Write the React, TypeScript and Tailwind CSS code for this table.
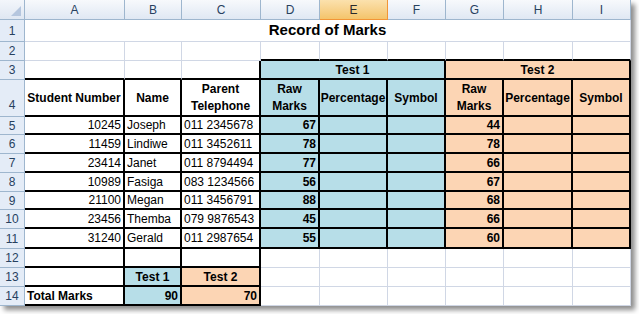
import React from 'react';

type Tone = 'blue' | 'orange' | 'none';

const Cell: React.FC<{
  children?: React.ReactNode;
  tone?: Tone;
  r?: boolean;
  b?: boolean;
  align?: 'left' | 'right' | 'center';
  bold?: boolean;
  span?: 'three' | 'nine';
  wrap?: boolean;
}> = ({ children, tone = 'none', r, b, align = 'left', bold, span, wrap }) => {
  const right = r ? 'border-r-2 border-r-black' : 'border-r border-r-[#d0d7e5]';
  const bottom = b ? 'border-b-2 border-b-black' : 'border-b border-b-[#d0d7e5]';
  const bg = tone === 'blue' ? 'bg-[#b7dee8]' : tone === 'orange' ? 'bg-[#fcd5b4]' : 'bg-white';
  const just =
    align === 'right' ? 'justify-end text-right' : align === 'center' ? 'justify-center text-center' : 'justify-start';
  const colSpan = span === 'three' ? 'col-span-3' : span === 'nine' ? 'col-span-9' : '';
  return (
    <div
      className={`flex items-center overflow-hidden px-[2px] text-black ${right} ${bottom} ${bg} ${just} ${colSpan} ${
        bold ? 'font-bold' : ''
      } ${wrap ? 'whitespace-normal leading-[17px]' : 'whitespace-nowrap'}`}
    >
      {children}
    </div>
  );
};

const RowNum: React.FC<{ n: number; bottom?: boolean }> = ({ n, bottom }) => (
  <div
    className={`flex justify-center border-r border-b border-[#9eb6ce] bg-[#e4ecf7] text-[#27415f] ${
      bottom ? 'items-end pb-[2px]' : 'items-center'
    }`}
  >
    {n}
  </div>
);

const students = [
  { id: 10245, name: 'Joseph', phone: '011 2345678', t1: 67, t2: 44 },
  { id: 11459, name: 'Lindiwe', phone: '011 3452611', t1: 78, t2: 78 },
  { id: 23414, name: 'Janet', phone: '011 8794494', t1: 77, t2: 66 },
  { id: 10989, name: 'Fasiga', phone: '083 1234566', t1: 56, t2: 67 },
  { id: 21100, name: 'Megan', phone: '011 3456791', t1: 88, t2: 68 },
  { id: 23456, name: 'Themba', phone: '079 9876543', t1: 45, t2: 66 },
  { id: 31240, name: 'Gerald', phone: '011 2987654', t1: 55, t2: 60 },
];

const columns = ['A', 'B', 'C', 'D', 'E', 'F', 'G', 'H', 'I'];

const App: React.FC = () => {
  return (
    <div className="h-[314px] w-[639px] bg-white font-['Liberation_Sans',Arial,sans-serif] text-[12px]">
      <div className="w-[631px] shadow-[4px_4px_5px_rgba(0,0,0,0.45)]">
        <div className="grid grid-cols-[25px_100px_57px_79px_59px_68px_58px_58px_69px_58px] grid-rows-[20px_22px_19px_19px_37px_18px_19px_19px_19px_18px_19px_20px_19px_19px_19px]">
          {/* column headers */}
          <div className="relative border-r border-b border-[#9eb6ce] bg-linear-to-b from-[#f3f6fb] to-[#dfe7f2]">
            <svg className="absolute right-[3px] bottom-[3px]" width="10" height="10" viewBox="0 0 10 10">
              <polygon points="10,0 10,10 0,10" fill="#b5c6de" />
            </svg>
          </div>
          {columns.map((c) =>
            c === 'E' ? (
              <div
                key={c}
                className="flex items-center justify-center border-r border-b border-[#f29536] bg-linear-to-b from-[#fbe1ad] to-[#f4c46a] text-[#2a2a2a]"
              >
                {c}
              </div>
            ) : (
              <div
                key={c}
                className="flex items-center justify-center border-r border-b border-[#9eb6ce] bg-linear-to-b from-[#f7f9fc] to-[#e0e8f3] text-[#27415f]"
              >
                {c}
              </div>
            )
          )}

          {/* row 1 */}
          <RowNum n={1} />
          <Cell span="nine" align="center" bold>
            <span className="text-[15px]">Record of Marks</span>
          </Cell>

          {/* row 2 */}
          <RowNum n={2} />
          <Cell />
          <Cell />
          <Cell />
          <Cell b />
          <Cell b />
          <Cell b />
          <Cell b />
          <Cell b />
          <Cell b />

          {/* row 3 */}
          <RowNum n={3} />
          <Cell b />
          <Cell b />
          <Cell b r />
          <Cell span="three" tone="blue" align="center" bold r b>
            Test 1
          </Cell>
          <Cell span="three" tone="orange" align="center" bold r b>
            Test 2
          </Cell>

          {/* row 4 */}
          <RowNum n={4} bottom />
          <Cell r b bold align="center">
            Student Number
          </Cell>
          <Cell r b bold align="center">
            Name
          </Cell>
          <Cell r b bold align="center" wrap>
            Parent Telephone
          </Cell>
          <Cell r b bold align="center" tone="blue" wrap>
            Raw Marks
          </Cell>
          <Cell r b bold align="center" tone="blue">
            Percentage
          </Cell>
          <Cell r b bold align="center" tone="blue">
            Symbol
          </Cell>
          <Cell r b bold align="center" tone="orange" wrap>
            Raw Marks
          </Cell>
          <Cell r b bold align="center" tone="orange">
            Percentage
          </Cell>
          <Cell r b bold align="center" tone="orange">
            Symbol
          </Cell>

          {/* rows 5-11 */}
          {students.map((s, i) => (
            <React.Fragment key={s.id}>
              <RowNum n={i + 5} />
              <Cell r b align="right">
                {s.id}
              </Cell>
              <Cell r b>{s.name}</Cell>
              <Cell r b>{s.phone}</Cell>
              <Cell r b align="right" bold tone="blue">
                {s.t1}
              </Cell>
              <Cell r b tone="blue" />
              <Cell r b tone="blue" />
              <Cell r b align="right" bold tone="orange">
                {s.t2}
              </Cell>
              <Cell r b tone="orange" />
              <Cell r b tone="orange" />
            </React.Fragment>
          ))}

          {/* row 12 */}
          <RowNum n={12} />
          <Cell r b />
          <Cell r b />
          <Cell r b />
          <Cell />
          <Cell />
          <Cell />
          <Cell />
          <Cell />
          <Cell />

          {/* row 13 */}
          <RowNum n={13} />
          <Cell r b />
          <Cell r b bold align="center" tone="blue">
            Test 1
          </Cell>
          <Cell r b bold align="center" tone="orange">
            Test 2
          </Cell>
          <Cell />
          <Cell />
          <Cell />
          <Cell />
          <Cell />
          <Cell />

          {/* row 14 */}
          <RowNum n={14} />
          <Cell r b bold>
            Total Marks
          </Cell>
          <Cell r b bold align="right" tone="blue">
            90
          </Cell>
          <Cell r b bold align="right" tone="orange">
            70
          </Cell>
          <Cell />
          <Cell />
          <Cell />
          <Cell />
          <Cell />
          <Cell />
        </div>
      </div>
    </div>
  );
};

export default App;
